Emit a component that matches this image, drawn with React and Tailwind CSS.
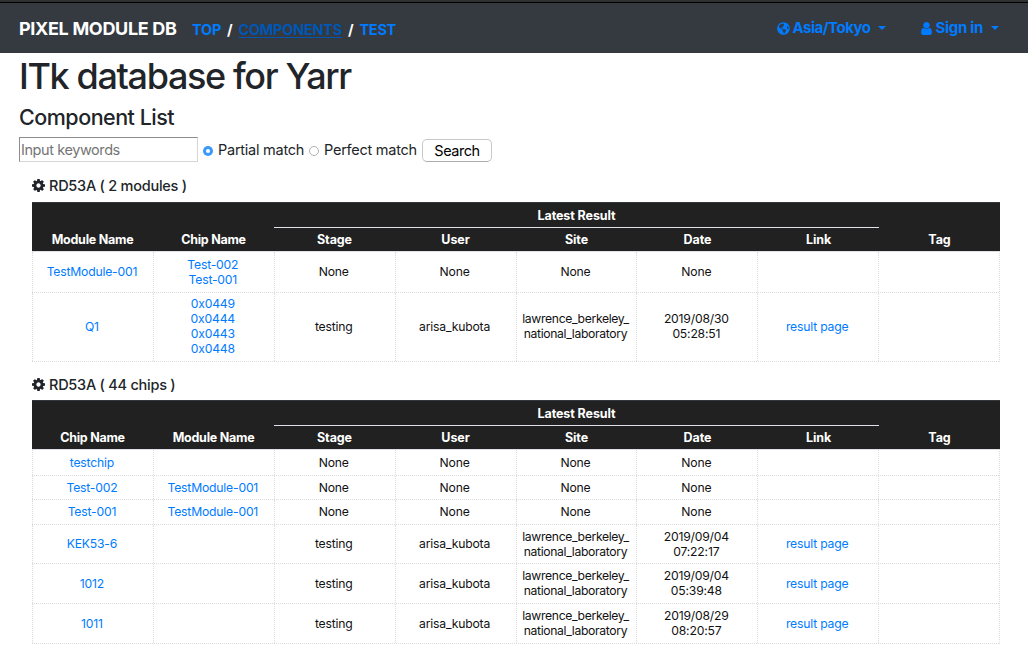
import { FaGlobeAmericas } from "react-icons/fa";

const SITE = ["lawrence_berkeley_", "national_laboratory"];
const none = (first, second) => [first, second, ["None"], ["None"], ["None"], ["None"], [], []];
const tested = (first, second, date) => [first, second, ["testing"], ["arisa_kubota"], SITE, date, ["result page"], []];

const modules = [
  { h: "h-[41px]", cells: none(["TestModule-001"], ["Test-002", "Test-001"]) },
  { h: "h-[69px]", cells: tested(["Q1"], ["0x0449", "0x0444", "0x0443", "0x0448"], ["2019/08/30", "05:28:51"]) },
];

const chips = [
  { h: "h-[26px]", cells: none(["testchip"], []) },
  { h: "h-[24px]", cells: none(["Test-002"], ["TestModule-001"]) },
  { h: "h-[25px]", cells: none(["Test-001"], ["TestModule-001"]) },
  { h: "h-[39px]", cells: tested(["KEK53-6"], [], ["2019/09/04", "07:22:17"]) },
  { h: "h-[40px]", cells: tested(["1012"], [], ["2019/09/04", "05:39:48"]) },
  { h: "h-[40px]", cells: tested(["1011"], [], ["2019/08/29", "08:20:57"]) },
];

function Cog() {
  return (
    <svg viewBox="128 128 1536 1536" className="mr-[4px] h-[13px] w-[13px]" fill="currentColor">
      <path d="M1152 896q0-106-75-181t-181-75-181 75-75 181 75 181 181 75 181-75 75-181zm512-109v222q0 12-8 23t-20 13l-185 28q-19 54-39 91 35 50 107 138 10 12 10 25t-9 23q-27 37-99 108t-94 71q-12 0-26-9l-138-108q-44 23-91 38-16 136-29 186-7 28-36 28h-222q-14 0-24.500-8.500t-11.500-21.500l-28-184q-49-16-90-37l-141 107q-10 9-25 9-14 0-25-11-126-114-165-168-7-10-7-23 0-12 8-23 15-21 51-66.500t54-70.500q-27-50-41-99l-183-27q-13-2-21-12.500t-8-23.500v-222q0-12 8-23t19-13l186-28q14-46 39-92-40-57-107-138-10-12-10-24 0-10 9-23 26-36 98.500-107.500t94.500-71.500q13 0 26 10l138 107q44-23 91-38 16-136 29-186 7-28 36-28h222q14 0 24.500 8.500t11.500 21.500l28 184q49 16 90 37l142-107q9-9 24-9 13 0 25 10 129 119 165 170 7 8 7 22 0 12-8 23-15 21-51 66.500t-54 70.500q26 50 41 98l183 28q13 2 21 12.500t8 23.500z" />
    </svg>
  );
}

function User() {
  return (
    <svg viewBox="0 128 1280 1536" className="ml-[35px] mr-[3px] h-[13px] w-[11px]" fill="currentColor">
      <path d="M1280 1399q0 109-62.500 187t-150.500 78h-854q-88 0-150.500-78t-62.500-187q0-85 8.500-160.500t31.500-152 58.500-131 94-89 134.500-34.500q131 128 313 128t313-128q76 0 134.500 34.500t94 89 58.500 131 31.500 152 8.500 160.500zm-256-887q0 159-112.500 271.500t-271.500 112.500-271.500-112.500-112.500-271.500 112.500-271.500 271.500-112.500 271.500 112.500 112.500 271.500z" />
    </svg>
  );
}

function Caret() {
  return <span className="h-0 w-0 border-x-4 border-t-4 border-x-transparent border-t-[#007bff]" />;
}

function ResultTable({ names, rows }) {
  return (
    <div className="w-[968px] text-[12.2px] leading-[15px] tracking-[-0.2px] text-[#111]">
      <div className="flex h-[49px] border-t border-[#32383e] bg-[#212121] text-center text-[12.5px] font-bold tracking-[-0.1px] text-white">
        {names.map((n) => (
          <div key={n} className="flex w-[121px] items-end justify-center pb-[4px] tracking-[-0.25px]">{n}</div>
        ))}
        <div className="flex w-[605px] flex-col">
          <div className="h-[25px] border-b border-[#dee2e6] pt-[5px]">Latest Result</div>
          <div className="grid grid-cols-5 pt-[4px]">
            {["Stage", "User", "Site", "Date", "Link"].map((n) => <div key={n}>{n}</div>)}
          </div>
        </div>
        <div className="flex w-[121px] items-end justify-center pb-[4px]">Tag</div>
      </div>
      <div className="border-r border-t border-r-[#dcdcdc] border-t-[#dee2e6] [border-right-style:dotted]">
        {rows.map((row, i) => (
          <div key={i} className={"flex border-b border-dotted border-[#dcdcdc] " + row.h}>
            {row.cells.map((lines, c) => (
              <div
                key={c}
                className={
                  "flex w-[120.875px] flex-col items-center justify-center border-l border-dotted border-[#dcdcdc] pr-[2px] " +
                  (row.h === "h-[69px]" && lines.length > 1 ? "pb-[2px] " : "pb-[1px] ") +
                  (c < 2 || c === 6 ? "text-[#007bff]" : c === 4 && lines.length > 1 ? "tracking-[-0.35px]" : "")
                }
              >
                {lines.map((l) => <div key={l}>{l}</div>)}
              </div>
            ))}
          </div>
        ))}
      </div>
    </div>
  );
}

export default function App() {
  return (
    <div className="h-[645px] w-[1028px] overflow-hidden bg-white font-['Inter','Liberation_Sans',sans-serif] text-[#212529]">
      <div className="h-[3px] border-b border-black bg-[#2f3032]" />
      <nav className="flex h-[50px] items-center bg-[#343a40] pl-[19px] pr-[29px] font-bold text-[#007bff]">
        <span className="w-[173px] whitespace-nowrap text-[18px] tracking-[-0.33px] text-white">PIXEL MODULE DB</span>
        <div className="flex gap-[6px] pt-[3px] text-[14.5px] tracking-[-0.25px]">
          <span>TOP</span>
          <span className="text-white">/</span>
          <span className="text-[#0056b3] underline underline-offset-2">COMPONENTS</span>
          <span className="text-white">/</span>
          <span>TEST</span>
        </div>
        <div className="ml-auto flex items-center text-[15px]">
          <FaGlobeAmericas className="mr-[3px] h-[13px] w-[13px]" />
          <span className="mr-[8px] tracking-[-0.5px]">Asia/Tokyo</span>
          <Caret />
          <User />
          <span className="mr-[8px] tracking-[-0.3px]">Sign in</span>
          <Caret />
        </div>
      </nav>
      <main className="pl-[19px]">
        <h1 className="h-[47px] whitespace-nowrap pt-[1px] text-[36px] font-medium leading-[44px] tracking-[-1.37px]">ITk database for Yarr</h1>
        <h2 className="h-[36px] pt-[4px] text-[21.5px] font-medium leading-[27px] tracking-[-0.5px]">Component List</h2>
        <form className="flex h-[26px] items-center text-[14.5px] tracking-[-0.25px]">
          <div className="flex h-[25px] w-[179px] items-center border border-[#d5d5d5] border-l-[#8d8d8d] border-t-[#8d8d8d] pl-[1px] pt-[2px] tracking-[-0.42px] text-[#757575]">Input keywords</div>
          <span className="ml-[5px] mr-[5px] mt-[3px] flex h-[10px] w-[10px] items-center justify-center rounded-full bg-[#3b99fc]">
            <span className="h-[4px] w-[4px] rounded-full bg-white" />
          </span>
          <span className="w-[86px] whitespace-nowrap pt-[2px]">Partial match</span>
          <span className="ml-[5px] mr-[5px] mt-[3px] h-[10px] w-[10px] rounded-full border border-[#b0b0b0]" />
          <span className="w-[93px] whitespace-nowrap pt-[2px]">Perfect match</span>
          <button type="button" className="ml-[5px] mt-[2px] h-[23px] w-[70px] rounded-[5px] border border-[#c8c8c8] border-b-[#acacac] tracking-[-0.45px] text-black">Search</button>
        </form>
        <section className="ml-[13px] flex flex-col">
          <h3 className="flex h-[40px] items-center pt-[7px] text-[14.5px] font-medium tracking-[-0.25px]">
            <Cog />RD53A ( 2 modules )
          </h3>
          <ResultTable names={["Module Name", "Chip Name"]} rows={modules} />
          <h3 className="flex h-[38px] items-center pt-[7px] text-[14.5px] font-medium tracking-[-0.25px]">
            <Cog />RD53A ( 44 chips )
          </h3>
          <ResultTable names={["Chip Name", "Module Name"]} rows={chips} />
        </section>
      </main>
    </div>
  );
}
